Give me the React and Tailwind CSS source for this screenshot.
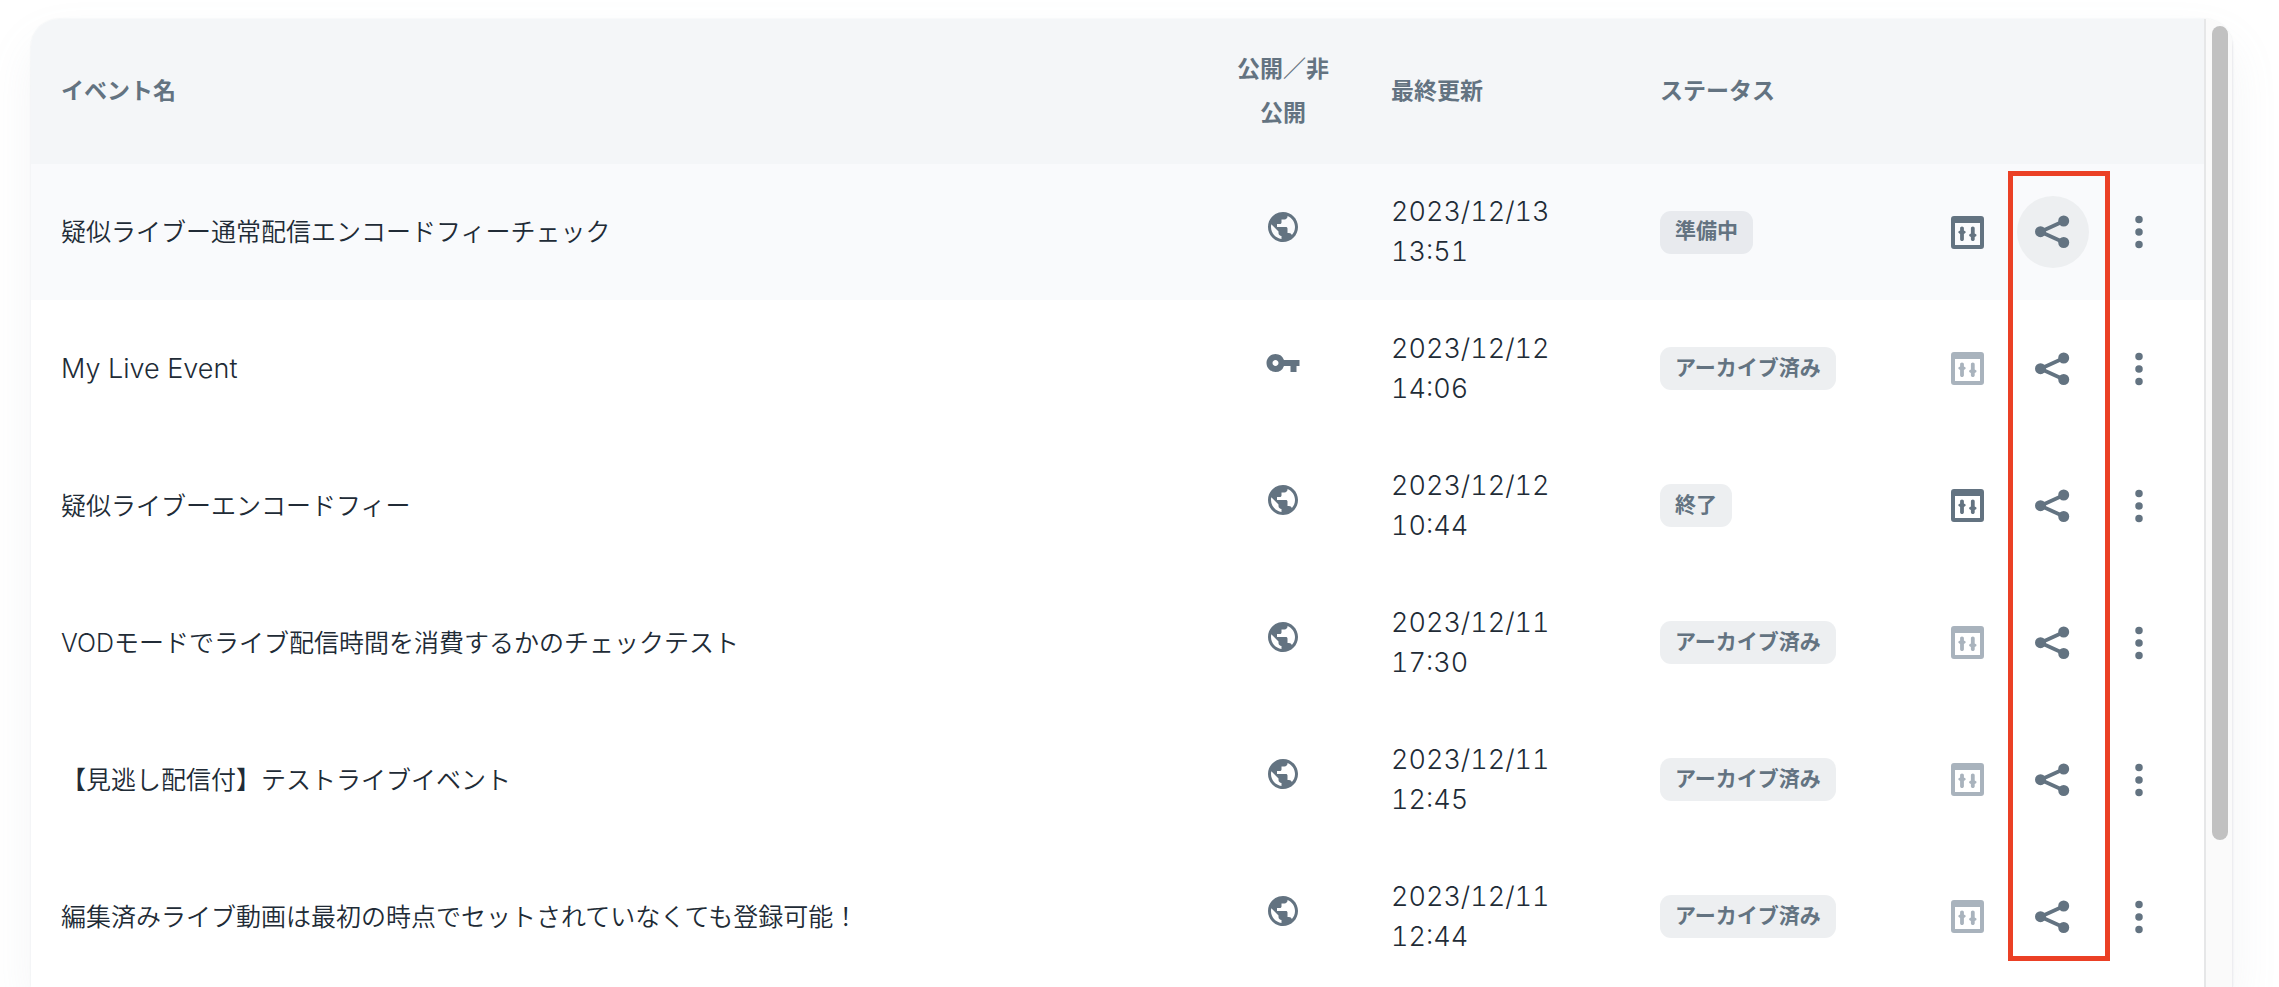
import clsx from "clsx";
import { BsThreeDotsVertical } from "react-icons/bs";
import { MdPublic, MdVpnKey } from "react-icons/md";

const events = [
    { id: 1, name: "疑似ライブー通常配信エンコードフィーチェック", isPublic: true, date: "2023/12/13", time: "13:51", status: "準備中", console: true },
    { id: 2, name: "My Live Event", isPublic: false, date: "2023/12/12", time: "14:06", status: "アーカイブ済み", console: false },
    { id: 3, name: "疑似ライブーエンコードフィー", isPublic: true, date: "2023/12/12", time: "10:44", status: "終了", console: true },
    { id: 4, name: "VODモードでライブ配信時間を消費するかのチェックテスト", isPublic: true, date: "2023/12/11", time: "17:30", status: "アーカイブ済み", console: false },
    { id: 5, name: "【見逃し配信付】テストライブイベント", isPublic: true, date: "2023/12/11", time: "12:45", status: "アーカイブ済み", console: false },
    { id: 6, name: "編集済みライブ動画は最初の時点でセットされていなくても登録可能！", isPublic: true, date: "2023/12/11", time: "12:44", status: "アーカイブ済み", console: false },
];

// Latin letters look small next to kana, so all-latin names go one step up
const isLatin = (text) => /^[\x20-\x7e]+$/.test(text);

function ConsoleIcon() {
    return (
        <svg width="33" height="33" viewBox="0 0 33 33" fill="currentColor">
            <path fillRule="evenodd" d="M3 0h27a3 3 0 0 1 3 3v27a3 3 0 0 1-3 3H3a3 3 0 0 1-3-3V3a3 3 0 0 1 3-3zM4 7v22h25V7z" />
            <path d="M11 10.5c1.1 0 1.9.8 1.9 1.8v2.100l1.700 1v1.400l-1.700 1.200v5.200c0 1-.8 1.800-1.900 1.800s-1.900-.8-1.900-1.800V18l-1.700-1.200v-1.400l1.700-1v-2.100c0-1 .8-1.800 1.900-1.800z" />
            <path d="M21.800 10.500c1.100 0 1.900.8 1.900 1.800v5.200l1.700 1v1.400l-1.700 1.200v2.100c0 1-.8 1.800-1.900 1.800s-1.900-.8-1.900-1.800v-2.100l-1.700-1.200v-1.400l1.700-1v-5.200c0-1 .8-1.800 1.900-1.800z" />
        </svg>
    );
}

function ShareIcon() {
    return (
        <svg width="36" height="34" viewBox="1 0 36 34" fill="currentColor">
            <path d="M29.500 6.200 6.500 16.700l23 10.500" fill="none" stroke="currentColor" strokeWidth="3.800" />
            <circle cx="6.500" cy="16.700" r="5.500" />
            <circle cx="29.700" cy="6" r="5.500" />
            <circle cx="29.700" cy="27.500" r="5.500" />
        </svg>
    );
}

function IconButton({ label, active, disabled, children }) {
    return (
        <button
            type="button"
            aria-label={label}
            disabled={disabled}
            className={clsx(
                "flex size-[72px] items-center justify-center rounded-full",
                disabled ? "text-[#a9b3bd]" : "text-[#637381]",
                active && "bg-[#edeff1]"
            )}
        >
            {children}
        </button>
    );
}

function EventRow({ event, hovered }) {
    const VisibilityIcon = event.isPublic ? MdPublic : MdVpnKey;

    return (
        <tr className={clsx(hovered ? "h-[136px] bg-[#f9fafc]" : "h-[137px]")}>
            <td className={clsx("px-[30px]", isLatin(event.name) && "text-[27px]")}>{event.name}</td>
            <td className="px-[30px]">
                <VisibilityIcon
                    title={event.isPublic ? "公開" : "非公開"}
                    className="mx-auto mb-[11px] size-[36px] text-[#637381]"
                />
            </td>
            <td className="px-[29px] text-[27px] tabular-nums">
                {event.date} {event.time}
            </td>
            <td className="px-[29px]">
                <span className="inline-flex h-[43px] items-center rounded-[11px] bg-[#919eab]/16 px-[15px] pb-[2px] align-middle text-[21px] font-bold text-[#637381]">
                    {event.status}
                </span>
            </td>
            <td className="px-[29px]">
                <div className="flex justify-end gap-[14px]">
                    <IconButton label="コンソール" disabled={!event.console}>
                        <ConsoleIcon />
                    </IconButton>
                    <IconButton label="共有" active={hovered}>
                        <ShareIcon />
                    </IconButton>
                    <IconButton label="メニュー">
                        <BsThreeDotsVertical className="size-[40px]" />
                    </IconButton>
                </div>
            </td>
        </tr>
    );
}

export default function App() {
    return (
        <div className="h-screen overflow-hidden bg-white pt-[19px] pr-[46px] pl-[31px] font-['Inter','Noto_Sans_CJK_JP',sans-serif] text-[#212b36]">
            <div className="flex h-full overflow-hidden rounded-t-[28px] shadow-[0_0_2px_rgba(145,158,171,0.20),0_24px_48px_rgba(145,158,171,0.10)]">
                <div className="relative min-w-0 flex-1 self-start">
                    <table className="w-full table-fixed text-left text-[25px] leading-[40px] font-[350]">
                        <colgroup>
                            <col />
                            <col className="w-[158px]" />
                            <col className="w-[269px]" />
                            <col className="w-[271px]" />
                            <col className="w-[302px]" />
                        </colgroup>
                        <thead>
                            <tr className="h-[145px] bg-[#f4f6f8] text-[23px] leading-[44px] text-[#637381]">
                                <th className="px-[30px] pb-[2px] font-bold">イベント名</th>
                                <th className="px-[30px] pb-[2px] text-center font-bold">公開／非公開</th>
                                <th className="px-[29px] pb-[2px] font-bold">最終更新</th>
                                <th className="px-[29px] pb-[2px] font-bold">ステータス</th>
                                <th className="px-[29px]" aria-label="操作" />
                            </tr>
                        </thead>
                        <tbody>
                            {events.map((event, i) => (
                                <EventRow key={event.id} event={event} hovered={i === 0} />
                            ))}
                        </tbody>
                    </table>

                    {/* highlight around the share column */}
                    <div className="pointer-events-none absolute top-[152px] right-[94px] bottom-[24px] w-[102px] border-5 border-[#eb4025]" />
                </div>

                {/* scrollbar */}
                <div className="w-[29px] border-r border-l-2 border-r-[#ededf0] border-l-[#e6e7e8] bg-[#fafafa] pt-[7px] pl-[6px]">
                    <div className="h-[814px] w-[16px] rounded-full bg-[#c1c1c1]" />
                </div>
            </div>
        </div>
    );
}
